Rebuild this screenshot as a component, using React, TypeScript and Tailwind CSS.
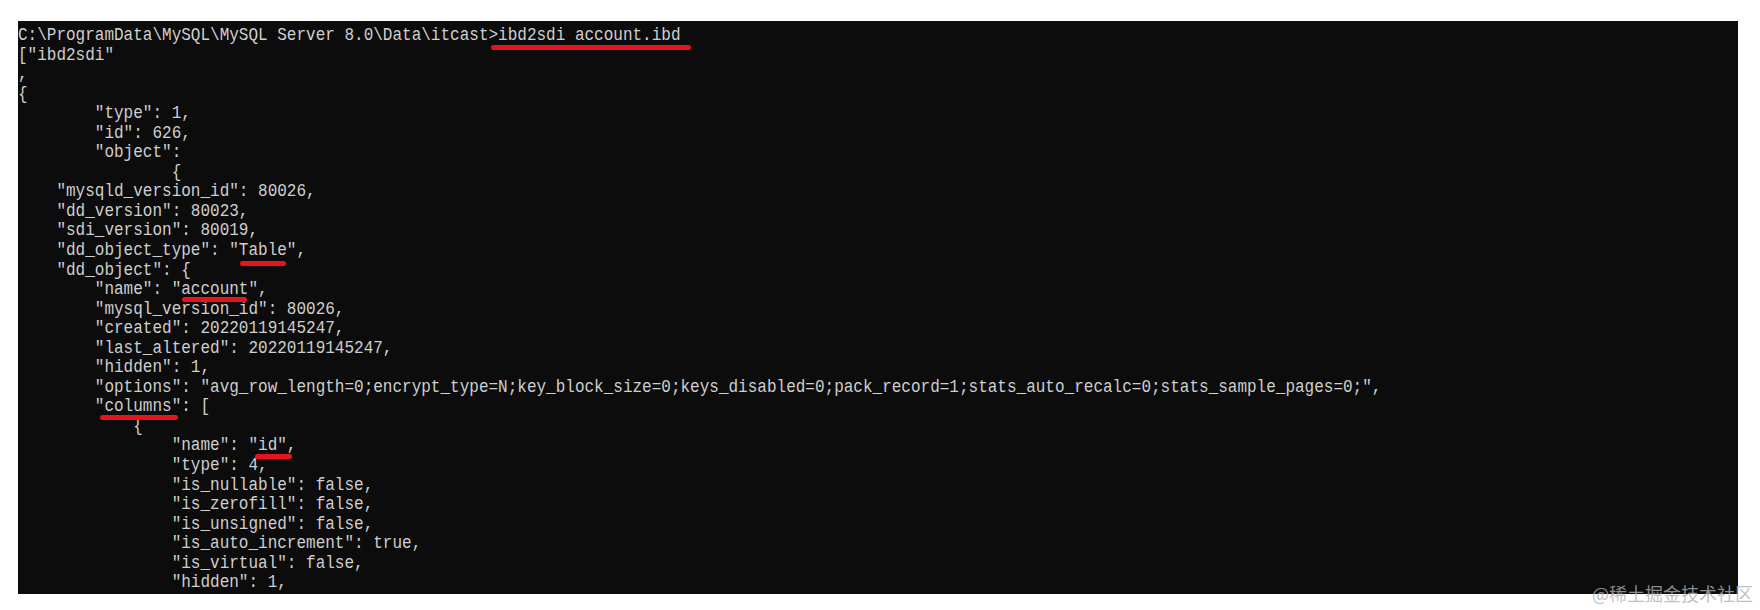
const lines = [
  "C:\\ProgramData\\MySQL\\MySQL Server 8.0\\Data\\itcast>ibd2sdi account.ibd",
  '["ibd2sdi"',
  ",",
  "{",
  '        "type": 1,',
  '        "id": 626,',
  '        "object":',
  "                {",
  '    "mysqld_version_id": 80026,',
  '    "dd_version": 80023,',
  '    "sdi_version": 80019,',
  '    "dd_object_type": "Table",',
  '    "dd_object": {',
  '        "name": "account",',
  '        "mysql_version_id": 80026,',
  '        "created": 20220119145247,',
  '        "last_altered": 20220119145247,',
  '        "hidden": 1,',
  '        "options": "avg_row_length=0;encrypt_type=N;key_block_size=0;keys_disabled=0;pack_record=1;stats_auto_recalc=0;stats_sample_pages=0;",',
  '        "columns": [',
  "            {",
  '                "name": "id",',
  '                "type": 4,',
  '                "is_nullable": false,',
  '                "is_zerofill": false,',
  '                "is_unsigned": false,',
  '                "is_auto_increment": true,',
  '                "is_virtual": false,',
  '                "hidden": 1,',
  '                "ordinal_position": 1,',
];

// red marker strokes drawn over the screenshot
const marks = [
  { left: 473, top: 24, width: 200 },
  { left: 222, top: 240, width: 46 },
  { left: 164, top: 276, width: 65 },
  { left: 82, top: 394, width: 78 },
  { left: 237, top: 433, width: 37 },
];

export default function App() {
  return (
    <div className="relative w-[1760px] h-[610px] bg-white overflow-hidden">
      <div className="relative ml-[18px] mt-[21px] w-[1720px] h-[573px] bg-[#0c0c0c] overflow-hidden">
        <div className="pt-[5px] font-['Liberation_Mono',monospace] text-[16px] leading-[19.55px] text-[#cfcfcf]">
          {lines.map((line, i) => (
            <div key={i} className="whitespace-pre h-[19.55px] scale-y-[1.2]">
              {line}
            </div>
          ))}
        </div>
        {marks.map((m, i) => (
          <span
            key={i}
            className="absolute h-[5px] rounded-full bg-[#e8141c]"
            style={{ left: m.left, top: m.top, width: m.width }}
          />
        ))}
      </div>
      <div className="absolute right-[7px] top-[581px] font-['Noto_Sans_CJK_SC',sans-serif] text-[18px] leading-[24px] text-[#afafaf]/80 whitespace-nowrap">
        @稀土掘金技术社区
      </div>
    </div>
  );
}
